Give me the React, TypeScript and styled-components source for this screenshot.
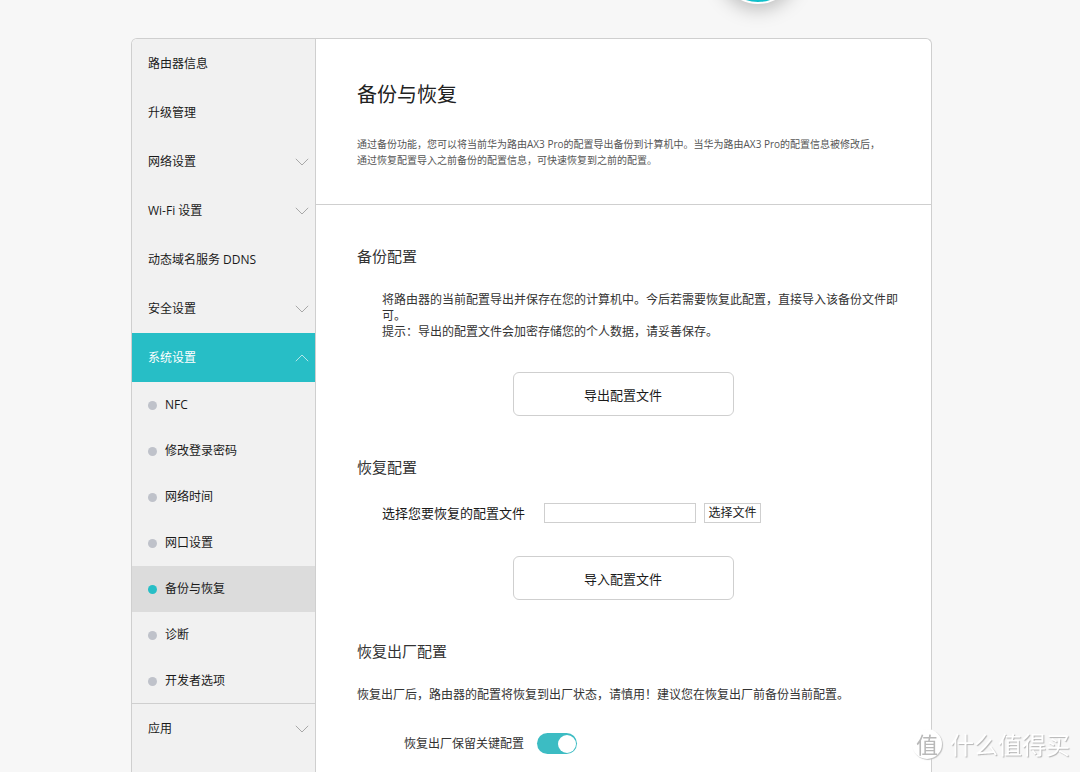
import React from "react";
import styled, { createGlobalStyle } from "styled-components";

const TEAL = "#27bec6";
const LINE = "#cfcfcf";
const FONT = '"Open Sans", "Noto Sans CJK SC", sans-serif';

const GlobalStyle = createGlobalStyle`
  *, *::before, *::after { box-sizing: border-box; }
  body {
    margin: 0;
    background: #f7f7f7;
    color: #1a1a1a;
    font-family: ${FONT};
    font-size: 12px;
    line-height: 16px;
  }
  button, input { font-family: inherit; color: inherit; }
  h1, h2, p, ul { margin: 0; padding: 0; font-weight: 400; }
  ul { list-style: none; }
`;

const Page = styled.div`
  min-height: 100vh;
  display: flex;
  flex-direction: column;
  padding-right: 17px;
  overflow: hidden;
`;

const TopBar = styled.header`
  position: relative;
  width: 100%;
  max-width: 801px;
  height: 38px;
  margin: 0 auto;
`;

const TabBadge = styled.span`
  position: absolute;
  right: 136px;
  bottom: 34px;
  width: 76px;
  height: 76px;
  border: 2px solid #fff;
  border-radius: 50%;
  background: #10bfca;
  box-shadow: 0 4px 20px rgba(0, 0, 0, 0.28);
`;

const Panel = styled.div`
  flex: 1;
  display: flex;
  width: 100%;
  max-width: 801px;
  margin: 0 auto;
  border: 1px solid ${LINE};
  border-bottom: 0;
  border-radius: 6px 6px 0 0;
  background: #fff;
  overflow: hidden;
`;

const Sidebar = styled.nav`
  flex: 0 0 184px;
  background: #f1f1f1;
  border-right: 1px solid ${LINE};
`;

const NavLink = styled.a<{ $active?: boolean }>`
  display: flex;
  align-items: center;
  justify-content: space-between;
  height: 49px;
  padding: 0 6px 0 16px;
  text-decoration: none;
  color: ${(p) => (p.$active ? "#fff" : "#1a1a1a")};
  background: ${(p) => (p.$active ? TEAL : "transparent")};
`;

const SubList = styled.ul`
  height: 322px;
  border-bottom: 1px solid ${LINE};
`;

const SubLink = styled.a<{ $active?: boolean }>`
  display: flex;
  align-items: center;
  gap: 8px;
  height: 46px;
  padding-left: 16px;
  text-decoration: none;
  color: #1a1a1a;
  background: ${(p) => (p.$active ? "#dcdcdc" : "transparent")};

  &::before {
    content: "";
    width: 9px;
    height: 9px;
    border-radius: 50%;
    background: ${(p) => (p.$active ? TEAL : "#bfc2ca")};
  }
`;

const Content = styled.main`
  flex: 1;
  min-width: 0;
`;

const Intro = styled.header`
  padding: 41px 28px 36px 41px;
  border-bottom: 1px solid ${LINE};
`;

const Title = styled.h1`
  font-size: 20px;
  line-height: 30px;
  color: #222;
`;

const Description = styled.p`
  margin-top: 26px;
  font-size: 10px;
  color: #555;
`;

const Section = styled.section`
  display: flex;
  flex-direction: column;
  padding: 41px 28px 0 41px;
`;

const SectionTitle = styled.h2`
  font-size: 15px;
  line-height: 20px;
  color: #333;
`;

const Text = styled.p<{ $indent?: boolean }>`
  margin-top: 26px;
  padding-left: ${(p) => (p.$indent ? 25 : 0)}px;
  color: #333;
`;

const ActionButton = styled.button`
  align-self: center;
  width: 221px;
  height: 44px;
  margin: 32px 14px 0 0;
  border: 1px solid ${LINE};
  border-radius: 6px;
  background: #fff;
  font-size: 13px;
`;

const FileRow = styled.div`
  display: flex;
  align-items: center;
  height: 22px;
  margin-top: 25px;
  padding-left: 25px;
`;

const FileLabel = styled.label`
  width: 162px;
  font-size: 13px;
`;

const FileInput = styled.input`
  width: 152px;
  height: 20px;
  padding: 0 4px;
  border: 1px solid ${LINE};
  background: #fff;
  font-size: 12px;
`;

const BrowseButton = styled.button`
  width: 57px;
  height: 20px;
  margin-left: 8px;
  padding: 0;
  border: 1px solid ${LINE};
  background: #fff;
  font-size: 12px;
  line-height: 16px;
`;

const SwitchRow = styled.div`
  display: flex;
  align-items: center;
  margin-top: 30px;
  padding-left: 47px;
  color: #333;
`;

const SwitchLabel = styled.label`
  width: 133px;
`;

const Switch = styled.input`
  appearance: none;
  display: flex;
  align-items: center;
  justify-content: flex-start;
  width: 40px;
  height: 21px;
  margin: 0;
  padding: 0 1px;
  border-radius: 11px;
  background: #c4c4c4;

  &::before {
    content: "";
    width: 18px;
    height: 18px;
    border-radius: 50%;
    background: #fff;
  }

  &:checked {
    justify-content: flex-end;
    background: #3cbcc3;
  }
`;

const Watermark = styled.div`
  position: fixed;
  right: 10px;
  bottom: 12px;
  display: flex;
  align-items: center;
  gap: 8px;
  color: #fff;
  font-size: 24px;
  line-height: 32px;
  font-family: "Noto Sans CJK SC", sans-serif;
  text-shadow: 1px 1px 1px #b4b4b4;
  pointer-events: none;
`;

const WatermarkSeal = styled.span`
  width: 30px;
  height: 30px;
  border-radius: 50%;
  background: #fff;
  color: #b9b9b9;
  box-shadow: 1px 1px 1px #c0c0c0;
  text-shadow: none;
  font-size: 22px;
  line-height: 28px;
  text-align: center;
`;

function Chevron({ up, color = "#a8a8a8" }: { up?: boolean; color?: string }) {
  return (
    <svg width="14" height="8" viewBox="0 0 14 8" fill="none" stroke={color} aria-hidden="true">
      <path d={up ? "M0.8 7.2 L7 1 L13.2 7.2" : "M0.8 0.8 L7 7 L13.2 0.8"} />
    </svg>
  );
}

const navItems = [
  { label: "路由器信息" },
  { label: "升级管理" },
  { label: "网络设置", more: true },
  { label: "Wi-Fi 设置", more: true },
  { label: "动态域名服务 DDNS" },
  { label: "安全设置", more: true },
];

const subItems = ["NFC", "修改登录密码", "网络时间", "网口设置", "备份与恢复", "诊断", "开发者选项"];

export default function App() {
  return (
    <>
      <GlobalStyle />
      <Page>
        <TopBar>
          <TabBadge />
        </TopBar>
        <Panel>
          <Sidebar>
            {navItems.map((item) => (
              <NavLink key={item.label} href="#">
                {item.label}
                {item.more && <Chevron />}
              </NavLink>
            ))}
            <NavLink href="#" $active>
              系统设置
              <Chevron up color="#b5e6e9" />
            </NavLink>
            <SubList>
              {subItems.map((label) => (
                <li key={label}>
                  <SubLink href="#" $active={label === "备份与恢复"}>
                    {label}
                  </SubLink>
                </li>
              ))}
            </SubList>
            <NavLink href="#">
              应用
              <Chevron />
            </NavLink>
          </Sidebar>
          <Content>
            <Intro>
              <Title>备份与恢复</Title>
              <Description>
                通过备份功能，您可以将当前华为路由AX3 Pro的配置导出备份到计算机中。当华为路由AX3 Pro的配置信息被修改后，
                <br />
                通过恢复配置导入之前备份的配置信息，可快速恢复到之前的配置。
              </Description>
            </Intro>
            <Section>
              <SectionTitle>备份配置</SectionTitle>
              <Text $indent>
                将路由器的当前配置导出并保存在您的计算机中。今后若需要恢复此配置，直接导入该备份文件即
                <br />
                可。
                <br />
                提示：导出的配置文件会加密存储您的个人数据，请妥善保存。
              </Text>
              <ActionButton type="button">导出配置文件</ActionButton>
            </Section>
            <Section>
              <SectionTitle>恢复配置</SectionTitle>
              <FileRow>
                <FileLabel htmlFor="config-file">选择您要恢复的配置文件</FileLabel>
                <FileInput id="config-file" type="text" />
                <BrowseButton type="button">选择文件</BrowseButton>
              </FileRow>
              <ActionButton type="button">导入配置文件</ActionButton>
            </Section>
            <Section>
              <SectionTitle>恢复出厂配置</SectionTitle>
              <Text>恢复出厂后，路由器的配置将恢复到出厂状态，请慎用！建议您在恢复出厂前备份当前配置。</Text>
              <SwitchRow>
                <SwitchLabel htmlFor="keep-config">恢复出厂保留关键配置</SwitchLabel>
                <Switch id="keep-config" type="checkbox" role="switch" defaultChecked />
              </SwitchRow>
            </Section>
          </Content>
        </Panel>
        <Watermark>
          <WatermarkSeal>值</WatermarkSeal>
          什么值得买
        </Watermark>
      </Page>
    </>
  );
}
